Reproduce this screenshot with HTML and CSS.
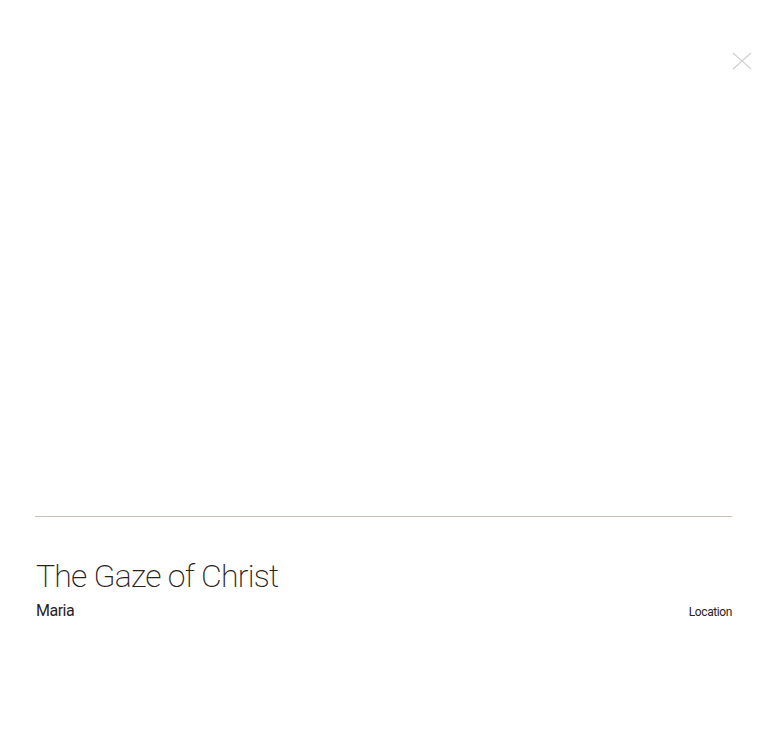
FILE: index.html
```html
<!DOCTYPE html>
<html lang="en">
<head>
<meta charset="utf-8">
<title>The Gaze of Christ</title>
<link rel="stylesheet" href="styles.css">
</head>
<body>
<div class="viewer">
  <div class="stage">
    <button class="close" aria-label="Close">
      <svg width="20" height="18" viewBox="0 0 20 18"><path d="M1 1 L19 17 M19 1 L1 17" stroke="#cfcfcf" stroke-width="1.1" fill="none"/></svg>
    </button>
  </div>
  <div class="caption">
    <div class="meta">
      <h1 class="title">The Gaze of Christ</h1>
      <div class="row">
        <span class="artist">Maria</span>
        <a class="location" href="#">Location</a>
      </div>
    </div>
  </div>
</div>
</body>
</html>
```
FILE: styles.css
```css
html, body {
  margin: 0;
  padding: 0;
  background: #fff;
}
body {
  font-family: Roboto, "Liberation Sans", sans-serif;
  color: #2b221c;
}
.viewer {
  height: 730px;
  display: flex;
  flex-direction: column;
}
.stage {
  position: relative;
  height: 516px;
  flex: none;
}
.close {
  position: absolute;
  top: 52px;
  right: 16px;
  width: 20px;
  height: 18px;
  padding: 0;
  border: 0;
  background: none;
  cursor: pointer;
}
.close svg { display: block; }
.caption {
  margin: 0 36px 0 35px;
  border-top: 1px solid #c9c2bb;
  padding-top: 39px;
}
.title {
  margin: 0 0 0 1px;
  font-weight: 200;
  font-size: 32px;
  line-height: 40px;
  letter-spacing: -0.78px;
}
.row {
  display: flex;
  justify-content: space-between;
  align-items: baseline;
  margin-top: 5px;
}
.artist {
  margin-left: 1px;
  font-size: 16px;
  font-weight: 400;
  letter-spacing: -0.5px;
}
.location {
  font-size: 12px;
  color: #2b221c;
  text-decoration: none;
  letter-spacing: -0.4px;
}
```
